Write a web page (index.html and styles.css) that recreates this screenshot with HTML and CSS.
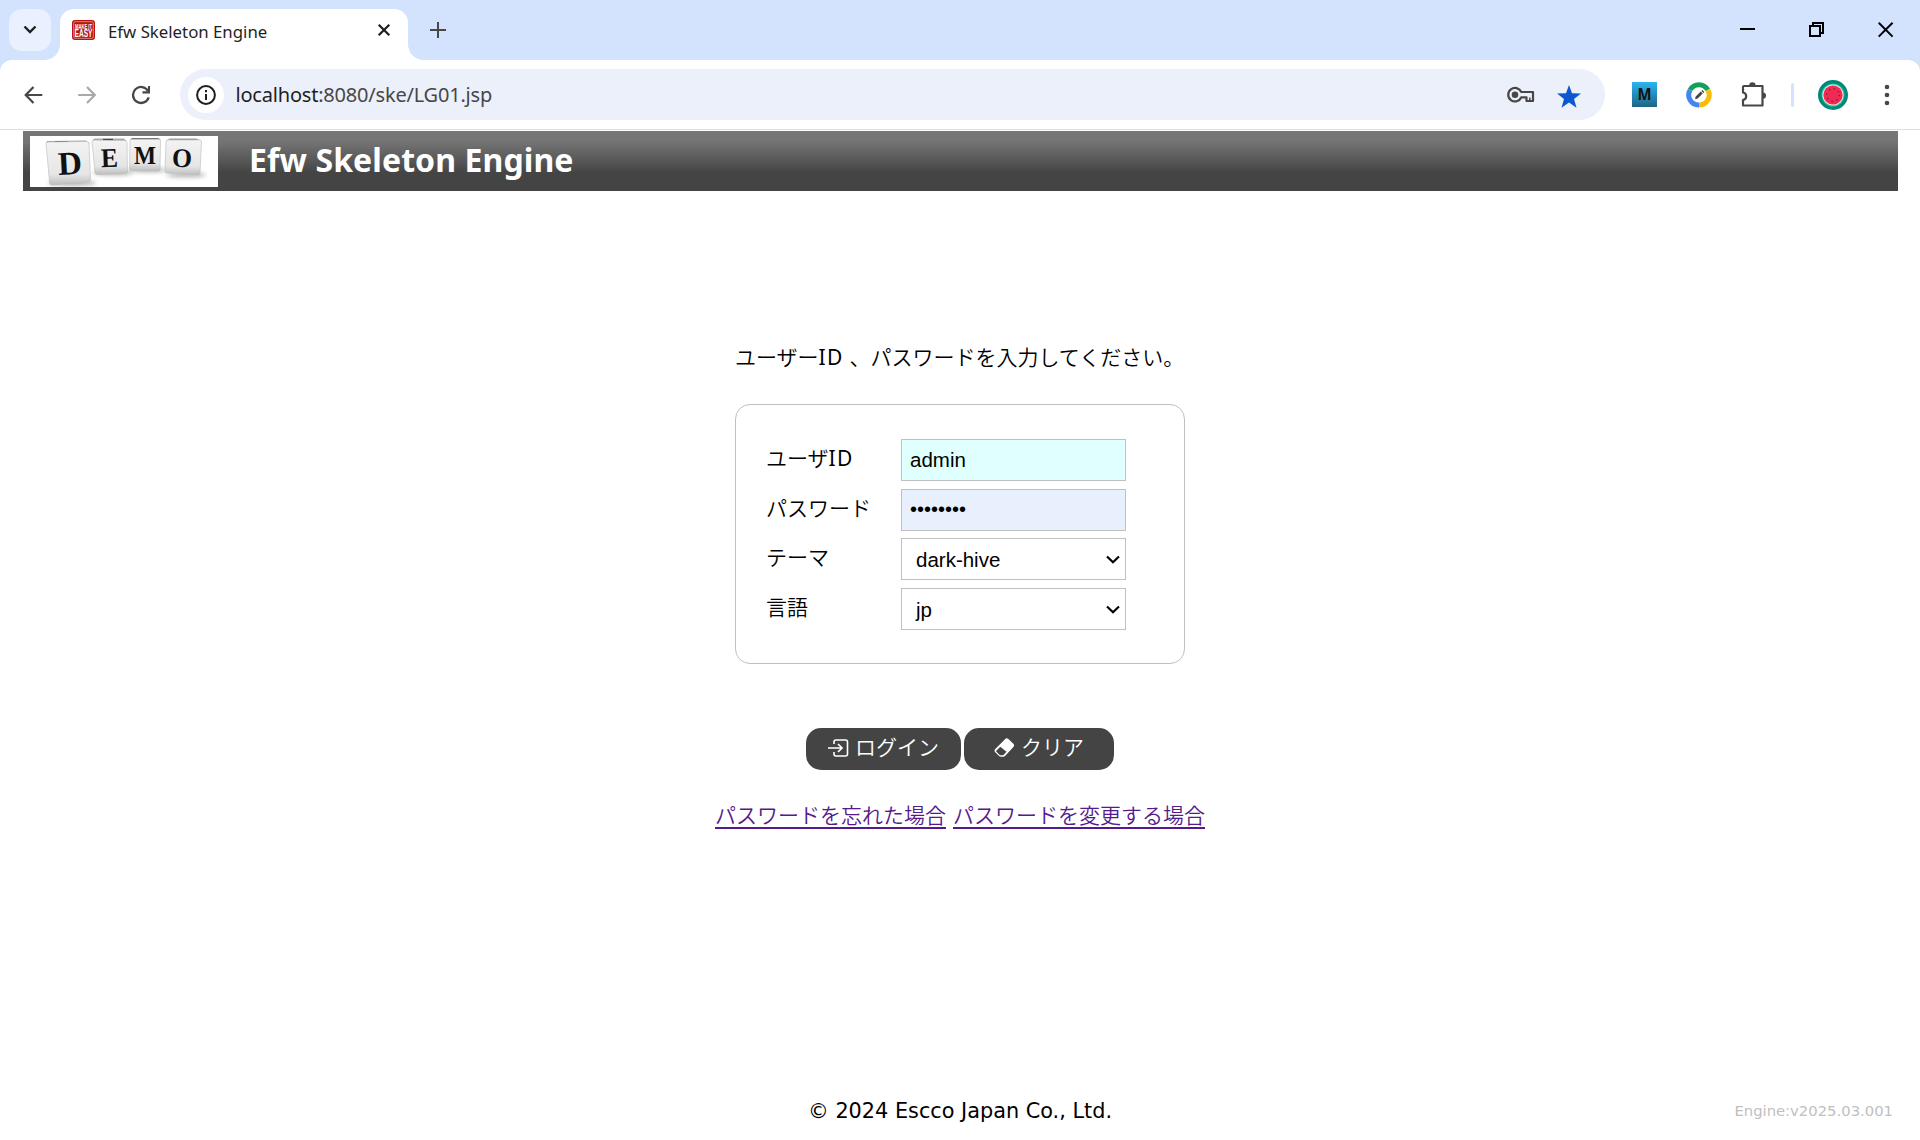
FILE: index.html
```html
<!DOCTYPE html>
<html lang="ja">
<head>
<meta charset="utf-8">
<title>Efw Skeleton Engine</title>
<link rel="stylesheet" href="styles.css">
</head>
<body>
<div class="tabstrip">
  <div class="tab-search"><svg width="14" height="10" viewBox="0 0 14 10"><path d="M1.500 1.500 7 7l5.500-5.500" fill="none" stroke="#1f1f1f" stroke-width="2.400"/></svg></div>
  <div class="tab">
    <svg class="favicon" width="23" height="20" viewBox="0 0 23 20"><rect x="0" y="0" width="23" height="20" rx="3" fill="#b81510"/><rect x="1.700" y="1.700" width="19.600" height="16.600" rx="1.500" fill="none" stroke="#e9b0aa" stroke-width=".7"/><text x="11.500" y="8.500" class="fav-top" textLength="17" lengthAdjust="spacingAndGlyphs">MAKE IT</text><text x="11.500" y="17.300" class="fav-bottom" textLength="18" lengthAdjust="spacingAndGlyphs">EASY</text></svg>
    <span class="tab-title">Efw Skeleton Engine</span>
    <svg class="tab-close" width="14" height="14" viewBox="0 0 14 14"><path d="M1.700 1.700l10.600 10.600M12.300 1.700l-10.600 10.600" stroke="#1f1f1f" stroke-width="2.200"/></svg>
  </div>
  <svg class="new-tab" width="16" height="16" viewBox="0 0 16 16"><path d="M8 0v16M0 8h16" stroke="#474747" stroke-width="2"/></svg>
  <div class="window-buttons">
    <svg width="16" height="16" viewBox="0 0 16 16"><path d="M0 7h15" stroke="#000" stroke-width="2"/></svg>
    <svg width="16" height="16" viewBox="0 0 16 16"><path d="M1 4h10v10H1zM4 4V1h10v10h-3" fill="none" stroke="#000" stroke-width="2"/></svg>
    <svg width="16" height="16" viewBox="0 0 16 16"><path d="M.7.700l13.900 13.900M14.600.700.700 14.600" stroke="#000" stroke-width="2"/></svg>
  </div>
</div>
<div class="toolbar">
  <svg class="nav back" width="20" height="20" viewBox="0 0 20 20"><path d="M18.300 10H2M9.500 2 1.700 10l7.800 8" fill="none" stroke="#474747" stroke-width="2.200"/></svg>
  <svg class="nav forward" width="20" height="20" viewBox="0 0 20 20"><path d="M.200 10H16.500M9 2l7.800 8-7.800 8" fill="none" stroke="#a9a9a9" stroke-width="2.200"/></svg>
  <svg class="nav reload" width="20" height="20" viewBox="0 0 20 20"><path d="M17.700 12.300A8 8 0 1 1 17 6" fill="none" stroke="#474747" stroke-width="2.300"/><path d="M19 1v7.500h-7.500V6.300H17V1z" fill="#474747"/></svg>
  <div class="omnibox">
    <span class="site-info"><svg width="20" height="20" viewBox="0 0 20 20"><circle cx="10" cy="10" r="8.900" fill="none" stroke="#1f1f1f" stroke-width="2"/><path d="M10 9v6M10 5v2.200" stroke="#1f1f1f" stroke-width="2"/></svg></span>
    <span class="url"><b>localhost</b>:8080/ske/LG01.jsp</span>
    <svg class="key" width="28" height="18" viewBox="0 0 28 18"><path d="M14.300 6A6.800 6.800 0 1 0 14.300 11.300H19.500V15h6.500V6z" fill="none" stroke="#474747" stroke-width="2.200" stroke-linejoin="round"/><circle cx="8" cy="8.700" r="3.300" fill="#474747"/><path d="M22.800 11.500V15" stroke="#474747" stroke-width="1.500"/></svg>
    <svg class="star" width="24" height="23" viewBox="0 0 24 23"><path d="M12 0l3 8.300 9 .2-7 5.500 2.500 8.700L12 17.600l-7.500 5.100L7 14 0 8.500l9-.2z" fill="#0b57d0"/></svg>
  </div>
  <svg class="ext-m" width="25" height="25" viewBox="0 0 25 25"><defs><linearGradient id="mg" x1="0" y1="0" x2="0" y2="1"><stop offset="0" stop-color="#2bb5f2"/><stop offset="1" stop-color="#1e6484"/></linearGradient></defs><rect width="25" height="25" fill="url(#mg)"/><text x="12.500" y="18" class="ext-letter" textLength="14" lengthAdjust="spacingAndGlyphs">M</text></svg>
  <svg class="ext-ring" width="26" height="26" viewBox="0 0 26 26"><g fill="none" stroke-width="5"><path d="M4.100 7.900A10.100 10.100 0 0 1 21.800 7.900" stroke="#12a05b"/><path d="M21.800 7.900A10.100 10.100 0 0 1 13 23.100" stroke="#fbbc05"/><path d="M13 23.100A10.100 10.100 0 0 1 4.100 7.900" stroke="#4285f4"/></g><path d="M9 17.300l.7-2.700 5-5 2 2-5 5zM15.400 8.900l1-1 2 2-1 1z" fill="#444"/></svg>
  <svg class="puzzle" width="26" height="25" viewBox="0 0 26 25"><path d="M3 4h18.500v19.500H2V18a3.800 3.800 0 0 0 0-7.500V5a1 1 0 0 1 1-1z" fill="none" stroke="#474747" stroke-width="2.200" stroke-linejoin="round"/><path d="M8.200 3.500a3.200 3.200 0 0 1 6.400 0zM21.800 10.400a3.200 3.200 0 0 1 0 6.400z" fill="#474747"/></svg>
  <span class="divider"></span>
  <svg class="avatar" width="30" height="30" viewBox="0 0 30 30"><circle cx="15" cy="15" r="15" fill="#00897b"/><circle cx="15" cy="15" r="11.500" fill="#1cc8a2"/><circle cx="15" cy="15" r="10.600" fill="#f5dcd5"/><circle cx="15" cy="15" r="9.600" fill="#ee2a55"/><circle cx="15" cy="15" r="6.300" fill="none" stroke="#6c1838" stroke-width="1.200" stroke-dasharray="1.200 3.748"/></svg>
  <svg class="menu" width="6" height="22" viewBox="0 0 6 22"><g fill="#474747"><circle cx="3" cy="3" r="2.300"/><circle cx="3" cy="11" r="2.300"/><circle cx="3" cy="19" r="2.300"/></g></svg>
</div>
<div class="page">
  <header class="banner">
    <svg class="logo" width="188" height="51" viewBox="0 0 188 51">
      <defs><linearGradient id="cube" x1="0" y1="0" x2="0" y2="1"><stop offset="0" stop-color="#f3f3f3"/><stop offset=".75" stop-color="#e6e6e6"/><stop offset="1" stop-color="#bdbdbd"/></linearGradient>
      <filter id="soft" x="-20%" y="-50%" width="140%" height="200%"><feGaussianBlur stdDeviation="2"/></filter></defs>
      <rect width="188" height="51" fill="#fff"/>
      <g fill="#aaa" filter="url(#soft)"><ellipse cx="42" cy="47" rx="24" ry="2.500"/><ellipse cx="83" cy="37" rx="20" ry="2"/><ellipse cx="118" cy="34" rx="19" ry="2"/><ellipse cx="156" cy="39" rx="20" ry="2"/></g>
      <path d="M16 7l1-2 39-.500 4 3.500z" fill="#a5a5a5"/><path d="M25 5.200h13v2H25z" fill="#444"/>
      <path d="M16 8q0-2 2-2l39-.500q2 0 2 2l1.500 36q0 2-2 2.300L22 49q-2 0-2.300-2z" fill="url(#cube)" stroke="#bbb" stroke-width=".6"/>
      <path d="M62 4l3-1.500h29l3 3z" fill="#aaa"/><path d="M73 2.800h10v1.500H73z" fill="#444"/>
      <path d="M62 6q0-1.700 2-1.700L95 4.500q2 0 2 2l.5 29q0 2-2 2l-28 1q-2 0-2.500-2z" fill="url(#cube)" stroke="#bbb" stroke-width=".6"/>
      <path d="M100 3.500l2-1.500h26l3 1.500z" fill="#777"/>
      <path d="M100 5q0-1.500 1.500-1.500h27.500q1.500 0 1.500 1.500l-.5 28q0 2-2 2l-26.500-.5q-2 0-2-2z" fill="url(#cube)" stroke="#bbb" stroke-width=".6"/>
      <path d="M136 4.500l4-2h26l5 2z" fill="#999"/>
      <path d="M136 6q0-2 2-2h31.500q2 0 2 2L170 37q0 2-2 2l-31-2q-2 0-2-2z" fill="url(#cube)" stroke="#bbb" stroke-width=".6"/>
      <g class="cube-letters"><text x="40" y="38.500" font-size="33" textLength="24" lengthAdjust="spacingAndGlyphs" transform="rotate(-3 40 28)">D</text><text x="79.500" y="31" font-size="27" textLength="17" lengthAdjust="spacingAndGlyphs" transform="rotate(-2 80 22)">E</text><text x="115" y="28" font-size="25" textLength="22" lengthAdjust="spacingAndGlyphs">M</text><text x="152" y="31" font-size="27" textLength="20" lengthAdjust="spacingAndGlyphs" transform="rotate(2 152 22)">O</text></g>
    </svg>
    <h1>Efw Skeleton Engine</h1>
  </header>
  <main class="login">
    <p class="intro">ユーザー<span class="latin">ID</span><span class="gap"></span>、パスワードを入力してください。</p>
    <form class="panel">
      <label for="uid">ユーザ<span class="latin">ID</span></label><input id="uid" class="field user" type="text" value="admin">
      <label for="pwd">パスワード</label><input id="pwd" class="field password" type="password" value="password">
      <label for="theme">テーマ</label><span class="field select" id="theme">dark-hive<svg width="14" height="9" viewBox="0 0 14 9"><path d="M1 1.500l6 5.700 6-5.700" fill="none" stroke="#000" stroke-width="2.200"/></svg></span>
      <label for="lang">言語</label><span class="field select" id="lang">jp<svg width="14" height="9" viewBox="0 0 14 9"><path d="M1 1.500l6 5.700 6-5.700" fill="none" stroke="#000" stroke-width="2.200"/></svg></span>
    </form>
    <div class="actions">
      <button type="button" class="btn signin"><svg width="21" height="18" viewBox="0 0 21 18"><path d="M6 5V3q0-2 2-2h9.500q2 0 2 2v12q0 2-2 2H8q-2 0-2-2v-2" fill="none" stroke="#fff" stroke-width="1.600"/><path d="M0 9h13.500M10 5l4 4-4 4" fill="none" stroke="#fff" stroke-width="1.700"/></svg><span>ログイン</span></button>
      <button type="button" class="btn clear"><svg width="21" height="19" viewBox="0 0 21 19"><path d="M11.500.8q1.500-1 2.900.2l5.200 5q1 1.300 0 2.800l-8.300 9q-1 .9-2.300.9H7q-1.300 0-2.200-.9L1 14q-1-1.400 0-2.800zM6.300 8.700l-4 4q-.3.500 0 .9l3.300 3.300q.5.400 1 .4h2q.5 0 .9-.4l3-3.100z" fill="#fff" fill-rule="evenodd"/></svg><span>クリア</span></button>
    </div>
    <nav class="links"><a href="#">パスワードを忘れた場合</a><a href="#">パスワードを変更する場合</a></nav>
  </main>
  <footer><span class="copyright">© 2024 Escco Japan Co., Ltd.</span><span class="version">Engine:v2025.03.001</span></footer>
</div>
</body>
</html>
```
FILE: styles.css
```css
* { box-sizing: border-box; }
body { margin: 0; width: 1920px; height: 1140px; overflow: hidden; background: #fff; color: #000; font-family: "Noto Sans", "Noto Sans CJK JP", sans-serif; display: flex; flex-direction: column; }
svg { display: block; flex: none; }

.tabstrip { height: 60px; background: #d3e3fd; display: flex; align-items: center; padding-left: 9px; box-shadow: 0 12px 0 #d3e3fd; }
.tab-search { width: 42px; height: 42px; border-radius: 13px; background: #e9f0fe; display: flex; align-items: center; justify-content: center; margin-right: 9px; }
.tab { position: relative; width: 348px; height: 51px; align-self: flex-end; background: #fff; border-radius: 14px 14px 0 0; display: flex; align-items: center; padding: 0 17px 9px 12px; }
.tab::before, .tab::after { content: ""; position: absolute; bottom: 0; width: 15px; height: 15px; }
.tab::before { left: -15px; background: radial-gradient(circle at 0 0, transparent 14.500px, #fff 15px); }
.tab::after { right: -15px; background: radial-gradient(circle at 100% 0, transparent 14.500px, #fff 15px); }
.favicon { overflow: visible; margin-top: -1px; }
.fav-top, .fav-bottom { font-family: "Liberation Sans", sans-serif; font-weight: bold; fill: #fff; text-anchor: middle; }
.fav-top { font-size: 7.500px; }
.fav-bottom { font-size: 11px; }
.tab-title { margin: 3px 0 0 13px; font-family: "Noto Sans", sans-serif; font-size: 16.800px; color: #1f1f1f; white-space: nowrap; }
.tab-close { margin-left: auto; }
.new-tab { margin-left: 22px; }
.window-buttons { margin-left: auto; display: flex; gap: 53px; padding-right: 26px; }

.toolbar { position: relative; height: 70px; background: #fff; border-bottom: 1px solid #dcdee1; border-radius: 12px 12px 0 0; display: flex; align-items: center; padding: 0 0 0 24px; }
.forward { margin-left: 34px; }
.reload { margin-left: 33px; }
.omnibox { width: 1425px; height: 51px; margin-left: 29px; border-radius: 26px; background: #ebf0fa; display: flex; align-items: center; padding: 0 24px 0 8px; }
.site-info { width: 36px; height: 36px; border-radius: 50%; background: #fff; display: flex; align-items: center; justify-content: center; }
.url { margin-left: 11.500px; font-size: 20px; letter-spacing: -.2px; color: #474747; white-space: nowrap; }
.url b { font-weight: normal; color: #1f1f1f; }
.key { margin-left: auto; }
.star { margin: 3px 0 0 22px; }
.ext-m { margin-left: 27px; }
.ext-letter { font: bold 16px "Open Sans", sans-serif; fill: #111; text-anchor: middle; }
.ext-ring { margin-left: 28.500px; }
.puzzle { margin-left: 29.500px; }
.divider { width: 3px; height: 24px; border-radius: 2px; background: #d3e3fd; margin-left: 24px; }
.avatar { margin-left: 24px; }
.menu { margin-left: 36px; }

.page { flex: 1; padding: 1px 22px 0 23px; display: flex; flex-direction: column; }
.banner { height: 60px; background: linear-gradient(#777 0%, #747474 18%, #444 70%, #444 100%); display: flex; align-items: center; padding-left: 7px; }
h1 { margin: -3px 0 0 31px; font-size: 32px; line-height: 44px; letter-spacing: .1px; color: #fff; white-space: nowrap; }
.cube-letters { font-family: "Liberation Serif", serif; font-weight: bold; fill: #111; text-anchor: middle; }

.login { display: flex; flex-direction: column; align-items: center; padding-right: 1px; font: 350 21px "Noto Sans CJK JP", sans-serif; }
.intro { width: 450px; height: 30px; margin: 151px 0 0; line-height: 29px; white-space: nowrap; }
.latin { font-family: "Noto Sans", sans-serif; font-weight: 400; letter-spacing: 1.200px; line-height: 1; }
.gap { display: inline-block; width: 6px; }
.panel { width: 450px; height: 260px; margin-top: 32px; border: 1px solid #c0c0c0; border-radius: 15px; padding: 34px 0 0 30px; display: grid; grid-template-columns: 135px 225px; grid-auto-rows: 42px; row-gap: 7.700px; }
.panel label { line-height: 36px; white-space: nowrap; }
.field { width: 225px; height: 42px; border: 1px solid #c0c0c0; background: #fff; font: 20.500px "Liberation Sans", sans-serif; color: #000; padding: 0 8px; }
.user { background: #e0ffff; }
.password { background: #e8f0fe; font-size: 20px; }
.select { display: flex; align-items: center; justify-content: space-between; padding: 1px 5px 0 14px; }
.actions { display: flex; gap: 3px; margin-top: 64px; }
.btn { height: 42px; border: 0; border-radius: 15px; background: #444; color: #fff; font: 350 21px/30px "Noto Sans CJK JP", sans-serif; display: flex; align-items: center; justify-content: center; gap: 6px; padding: 0 0 3px; white-space: nowrap; }
.btn span { margin-top: -4px; }
.signin { width: 155px; }
.clear { width: 150px; }
.links { display: flex; gap: 7px; margin-top: 29px; }
.links a { color: #551a8b; line-height: 30px; text-decoration: underline; text-decoration-thickness: 2px; text-underline-offset: 4px; white-space: nowrap; }

footer { margin-top: auto; height: 60px; display: grid; grid-template-columns: 1fr auto 1fr; align-items: center; padding: 0 5px 0 4px; white-space: nowrap; font-family: "DejaVu Sans", sans-serif; }
.copyright { grid-column: 2; padding-top: 2px; font-size: 20.800px; }
.version { grid-column: 3; justify-self: end; font-size: 14.800px; color: #c0c0c0; }
```
